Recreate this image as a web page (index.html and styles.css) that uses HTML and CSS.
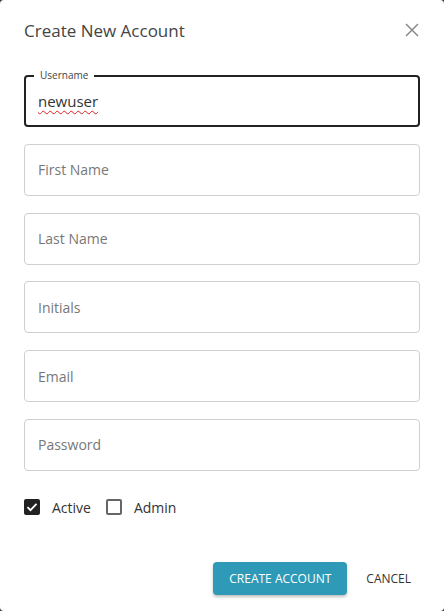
FILE: index.html
```html
<!DOCTYPE html>
<html>
<head>
<meta charset="utf-8">
<link rel="stylesheet" href="styles.css">
</head>
<body>
<div class="dialog">
  <div class="header">
    <h1 class="title">Create New Account</h1>
    <span class="close" aria-label="Close">
      <svg width="14" height="14" viewBox="0 0 14 14"><path d="M1 1L13 13M13 1L1 13" stroke="#8a8a8a" stroke-width="1.5" fill="none"/></svg>
    </span>
  </div>
  <form class="fields">
    <div class="field focused">
      <span class="flabel">Username</span>
      <span class="value spell">newuser</span>
    </div>
    <div class="field"><span class="placeholder">First Name</span></div>
    <div class="field"><span class="placeholder">Last Name</span></div>
    <div class="field"><span class="placeholder">Initials</span></div>
    <div class="field"><span class="placeholder">Email</span></div>
    <div class="field"><span class="placeholder">Password</span></div>
    <div class="checks">
      <label class="check">
        <span class="box checked">
          <svg width="12" height="10" viewBox="0 0 12 10"><path d="M1.5 5.2L4.5 8.2L10.5 1.8" stroke="#fff" stroke-width="1.8" fill="none"/></svg>
        </span>
        <span class="clabel">Active</span>
      </label>
      <label class="check">
        <span class="box"></span>
        <span class="clabel">Admin</span>
      </label>
    </div>
  </form>
  <div class="actions">
    <button class="btn primary" type="button">CREATE ACCOUNT</button>
    <button class="btn text" type="button">CANCEL</button>
  </div>
</div>
</body>
</html>
```
FILE: styles.css
```css
html, body {
  margin: 0;
  padding: 0;
  background: #3a3a3a;
  width: 444px;
  height: 611px;
  overflow: hidden;
}
.dialog {
  box-sizing: border-box;
  width: 444px;
  height: 611px;
  background: #fff;
  border-radius: 4px;
  font-family: "Open Sans", "Noto Sans", sans-serif;
  padding: 0 24px 0 24px;
  display: flex;
  flex-direction: column;
}
.header {
  display: flex;
  justify-content: space-between;
  align-items: center;
  height: 60px;
}
.title {
  margin: 0;
  font-size: 17px;
  font-weight: 400;
  color: #444;
  letter-spacing: 0;
}
.close {
  display: flex;
  width: 14px;
  height: 14px;
  margin-right: 1px;
}
.fields {
  display: flex;
  flex-direction: column;
  gap: 16.75px;
  margin-top: 16px;
}
.field {
  box-sizing: border-box;
  position: relative;
  height: 52px;
  border: 1px solid #cfcfcf;
  border-radius: 4px;
  display: flex;
  align-items: center;
  padding-left: 13px;
}
.field.focused {
  height: 52px;
  margin-top: -1px;
  border: 2px solid #222;
  padding-left: 12px;
}
.flabel {
  position: absolute;
  top: -9px;
  left: 8px;
  background: #fff;
  padding: 0 6px;
  font-size: 10px;
  line-height: 14px;
  color: #444;
}
.value {
  font-size: 15px;
  color: #333;
}
.spell {
  text-decoration: underline wavy #e02020;
  text-decoration-thickness: 1px;
  text-underline-offset: 3px;
}
.placeholder {
  font-size: 14px;
  color: #777;
}
.checks {
  display: flex;
  gap: 15px;
  margin-top: 10px;
  align-items: center;
}
.check {
  display: flex;
  align-items: center;
  gap: 12px;
}
.box {
  box-sizing: border-box;
  width: 16px;
  height: 16px;
  border: 2px solid #666;
  border-radius: 2px;
  display: flex;
  align-items: center;
  justify-content: center;
}
.box.checked {
  background: #222;
  border-color: #222;
}
.clabel {
  font-size: 14px;
  color: #333;
}
.actions {
  margin-top: auto;
  margin-bottom: 16px;
  display: flex;
  justify-content: flex-end;
  align-items: center;
  gap: 10px;
}
.btn {
  font-family: "Open Sans", "Noto Sans", sans-serif;
  font-size: 12px;
  border: none;
  border-radius: 4px;
  cursor: pointer;
}
.btn.primary {
  background: #2e9ab7;
  color: #fff;
  height: 33px;
  padding: 0 16px;
  box-shadow: 0 2px 3px rgba(0,0,0,0.25);
}
.btn.text {
  background: transparent;
  color: #333;
  height: 33px;
  padding: 0 9px;
}
```
